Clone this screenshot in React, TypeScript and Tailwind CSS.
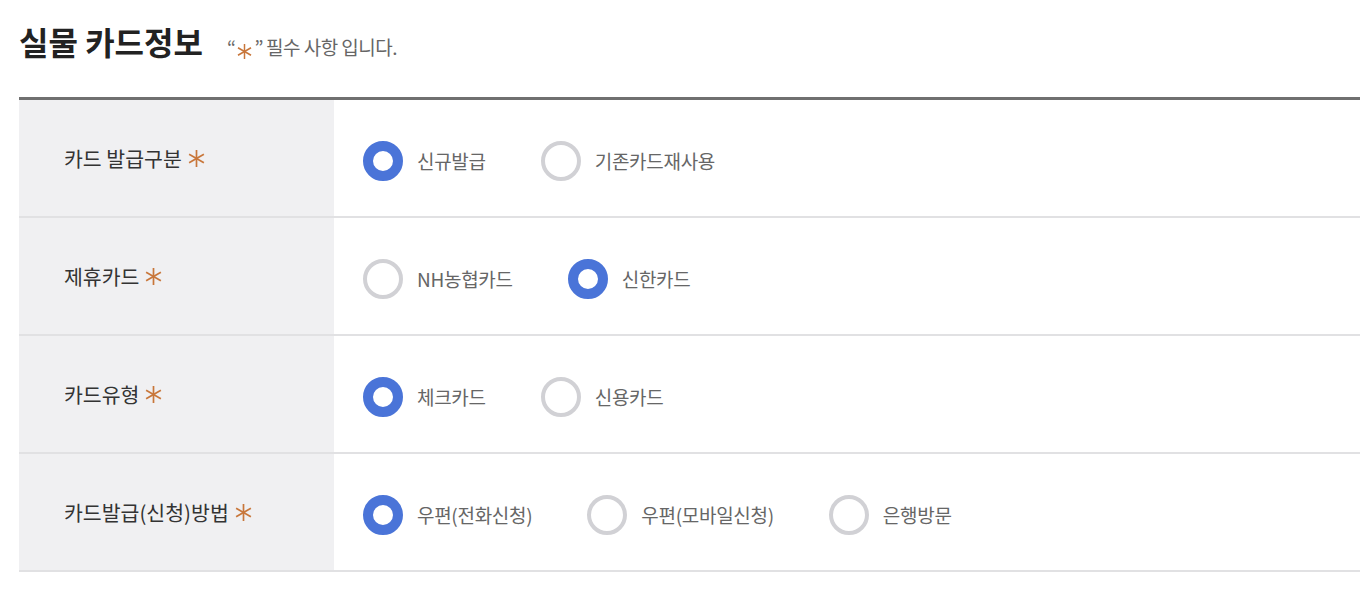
import React from "react";

const Star = ({ size = 17 }: { size?: number }) => (
  <svg width={size} height={size} viewBox="0 0 20 20" className="inline-block" aria-hidden>
    <g stroke="#c8763a" strokeWidth="2" strokeLinecap="butt">
      <line x1="10" y1="0" x2="10" y2="20" />
      <line x1="1.3" y1="5" x2="18.7" y2="15" />
      <line x1="1.3" y1="15" x2="18.7" y2="5" />
    </g>
  </svg>
);

type Row = { label: string; options: string[]; checked: number };

const rows: Row[] = [
  { label: "카드 발급구분", options: ["신규발급", "기존카드재사용"], checked: 0 },
  { label: "제휴카드", options: ["NH농협카드", "신한카드"], checked: 1 },
  { label: "카드유형", options: ["체크카드", "신용카드"], checked: 0 },
  { label: "카드발급(신청)방법", options: ["우편(전화신청)", "우편(모바일신청)", "은행방문"], checked: 0 },
];

const Radio = ({ on }: { on: boolean }) =>
  on ? (
    <span className="block w-10 h-10 rounded-full border-[10px] border-[#4a74d8] bg-white shrink-0" />
  ) : (
    <span className="block w-10 h-10 rounded-full border-[4px] border-[#d1d1d5] bg-white shrink-0" />
  );

export default function App() {
  return (
    <div
      className="w-[1360px] h-[608px] bg-white overflow-hidden"
      style={{ fontFamily: '"Noto Sans CJK KR", "Noto Sans", sans-serif' }}
    >
      <div className="pl-[19px]">
        <div className="flex items-baseline pt-[15px] h-[97px]">
          <h1 className="text-[32px] leading-[52px] font-bold text-[#222]">실물 카드정보</h1>
          <p className="ml-[24px] text-[19px] text-[#666] tracking-[-0.5px] flex items-baseline">
            <span>“</span>
            <span className="mx-[2px] relative top-[2px]">
              <Star size={15} />
            </span>
            <span>”</span>
            <span className="ml-[3px]">필수 사항 입니다.</span>
          </p>
        </div>
        <div className="border-t-[3px] border-[#707070]">
          {rows.map((r, i) => (
            <div key={i} className="flex h-[118px] border-b-2 border-[#e1e1e3]">
              <div className="w-[315px] shrink-0 bg-[#f0f0f2] flex items-center pl-[45px] text-[20.5px] text-[#333]">
                <span>{r.label}</span>
                <span className="ml-[6px] flex items-center">
                  <Star />
                </span>
              </div>
              <div className="flex-1 flex items-center pl-[29px] pt-[6px] gap-[55px]">
                {r.options.map((o, j) => (
                  <label key={j} className="flex items-center gap-[14px] text-[19px] text-[#666] tracking-[-0.3px]">
                    <Radio on={j === r.checked} />
                    <span>{o}</span>
                  </label>
                ))}
              </div>
            </div>
          ))}
        </div>
      </div>
    </div>
  );
}
